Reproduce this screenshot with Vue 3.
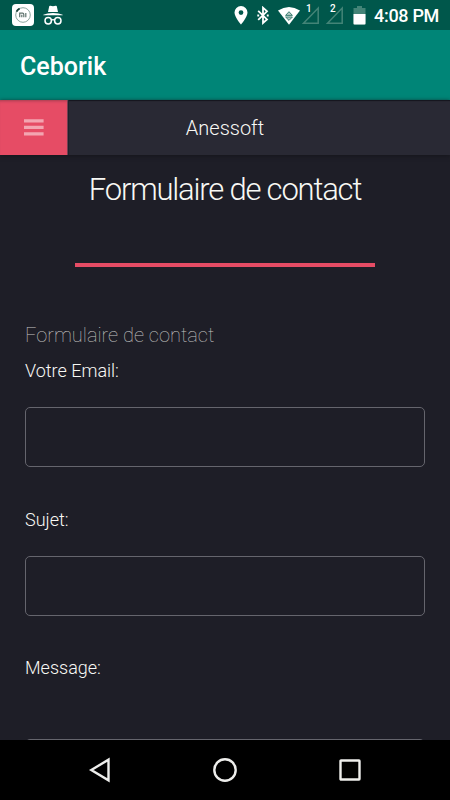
<script setup>
const fields = [
  { id: 'email', label: 'Votre Email:' },
  { id: 'subject', label: 'Sujet:' },
  { id: 'message', label: 'Message:' },
]
</script>

<template>
  <div class="screen">
    <div class="status">
      <svg class="mi" width="22" height="22" viewBox="0 0 22 22">
        <rect width="22" height="22" rx="4" fill="#fff" />
        <circle cx="11" cy="11" r="7.3" fill="none" stroke="#8da69f" stroke-width="1" />
        <path d="M4.5 7.6A7.3 7.3 0 0 1 7.6 4.5" fill="none" stroke="#173f37" stroke-width="1.9" />
        <path d="M7.7 13.2V9.2H10.6Q11.8 9.2 11.8 10.4V13.2M9.8 10.7V13.2M13.8 9V13.2" fill="none" stroke="#60746f" stroke-width="1.2" />
      </svg>
      <svg class="incognito" width="20" height="21" viewBox="0 0 20 21">
        <path d="M5 7 6.2 1.2Q6.5.5 7.4.8L10 1.3 12.6.8Q13.5.5 13.8 1.2L15 7ZM.3 9.8Q4 8 10 8T19.7 9.8V10.3H.3Z" fill="#fff" />
        <circle cx="5.2" cy="15.8" r="3.2" fill="none" stroke="#fff" stroke-width="1.5" />
        <circle cx="14.8" cy="15.8" r="3.2" fill="none" stroke="#fff" stroke-width="1.5" />
        <path d="M8.3 15.3Q10 14 11.7 15.3" fill="none" stroke="#fff" stroke-width="1.4" />
      </svg>
      <svg class="pin" width="14" height="19" viewBox="0 0 14 19">
        <path fill-rule="evenodd" d="M7 0A6.5 6.5 0 0 0 .5 6.5C.5 11 7 18.5 7 18.5S13.5 11 13.5 6.5A6.5 6.5 0 0 0 7 0ZM7 4.2A2.4 2.4 0 1 1 7 9 2.4 2.4 0 0 1 7 4.2Z" fill="#fff" />
      </svg>
      <svg class="bluetooth" width="12" height="19" viewBox="0 0 12 19">
        <path d="M1.2 4.8 10 13.4 6 17V1.7L10 5.3 1.2 13.9" fill="none" stroke="#fff" stroke-width="1.8" />
        <path d="M.3 8.4H2.2V10.4H.3ZM9.8 8.4H11.7V10.4H9.8Z" fill="#fff" />
      </svg>
      <svg class="wifi" width="22" height="18" viewBox="0 0 22 18">
        <path d="M0 3.6Q11-3.5 22 3.6L11 17.7Z" fill="#fff" />
        <path d="M7.6 8.4 11 4.7 14.4 8.4ZM7.6 10H14.4L11 13.4Z" fill="#b4c8c4" stroke="#3d8074" stroke-width="1" />
      </svg>
      <svg v-for="n in 2" :key="n" class="signal" :class="'signal-' + n" width="19" height="22" viewBox="0 0 19 22">
        <path d="M2.5 19.2H17.2V4Z" fill="none" stroke="#438477" stroke-width="1.5" />
        <text x="5" y="7.5" class="sim">{{ n }}</text>
      </svg>
      <svg class="battery" width="13" height="19" viewBox="0 0 13 19">
        <path d="M4 0H9V2H12.5V18.5H.5V2H4Z" fill="#438477" />
        <path d="M.5 8H12.5V17.5Q12.5 18.5 11.5 18.5H1.5Q.5 18.5.5 17.5Z" fill="#fff" />
      </svg>
      <span class="clock">4:08 PM</span>
    </div>
    <header class="app-bar">Ceborik</header>
    <nav class="site-bar">
      <button class="menu" aria-label="Menu">
        <svg width="20" height="17" viewBox="0 0 20 17"><path d="M0 .3H19.6V3.5H0ZM0 6.8H19.6V10H0ZM0 13.3H19.6V16.5H0Z" /></svg>
      </button>
      <span class="brand">Anessoft</span>
    </nav>
    <main class="content">
      <h1>Formulaire de contact</h1>
      <div class="rule"></div>
      <p class="legend">Formulaire de contact</p>
      <div v-for="f in fields" :key="f.id" class="field" :class="f.id">
        <label :for="f.id">{{ f.label }}</label>
        <textarea v-if="f.id === 'message'" :id="f.id"></textarea>
        <input v-else :id="f.id" type="text" />
      </div>
    </main>
    <footer class="nav">
      <svg width="26" height="26" viewBox="0 0 26 26"><path d="M4.3 13 21.5 2.7V23.3Z" /></svg>
      <svg width="26" height="26" viewBox="0 0 26 26"><circle cx="13" cy="13" r="10.7" /></svg>
      <svg width="26" height="26" viewBox="0 0 26 26"><rect x="3.5" y="3.5" width="19" height="19" rx=".5" /></svg>
    </footer>
  </div>
</template>

<style>
body { margin: 0; background: #000; }
</style>

<style scoped>
.screen {
  width: 450px;
  height: 800px;
  display: flex;
  flex-direction: column;
  overflow: hidden;
  background: #1e1e27;
  color: #f8f8f4;
  font-family: Roboto, sans-serif;
}
.status {
  flex: none;
  box-sizing: border-box;
  height: 30px;
  padding-left: 12px;
  display: flex;
  align-items: center;
  background: #00574b;
}
.status svg { flex: none; }
.incognito { margin-left: 9px; }
.pin { margin-left: 170.5px; }
.bluetooth { margin-left: 9.5px; }
.wifi { margin: 1px 0 0 8.5px; }
.signal { overflow: visible; }
.signal-1 { margin-left: 1px; }
.signal-2 { margin-left: 5px; }
.battery { margin-left: 9px; }
.sim { font: 500 10px Roboto, sans-serif; fill: #fff; }
.clock {
  margin: 2px 0 0 8.5px;
  font-size: 18px;
  font-weight: 500;
  letter-spacing: -.3px;
  line-height: 28px;
  white-space: nowrap;
  color: #fff;
}
.app-bar {
  flex: none;
  box-sizing: border-box;
  height: 70px;
  padding: 2px 20px 0;
  display: flex;
  align-items: center;
  background: #008577;
  color: #fff;
  font-size: 25px;
  font-weight: 500;
}
.site-bar {
  flex: none;
  height: 55px;
  display: flex;
  background: #292934;
  box-shadow: inset 0 2px 1px -1px #15151d, 0 1px 4px #15151c;
}
.menu {
  box-sizing: border-box;
  width: 68px;
  padding: 0;
  border: 0;
  border-right: 1px solid #754052;
  box-shadow: inset 0 3px 3px -2px #a33d50, 1px 0 #20222c;
  background: #e64c65;
  display: flex;
  align-items: center;
  justify-content: center;
}
.menu path { fill: #f3a5b1; }
.brand {
  flex: 1;
  padding-right: 68px;
  text-align: center;
  line-height: 56px;
  font-size: 20px;
  font-weight: 300;
}
.content {
  flex: 1;
  min-height: 0;
  overflow: hidden;
  padding: 0 25px;
}
h1 {
  margin: 15px 0 0;
  text-align: center;
  font-size: 31px;
  line-height: 40px;
  font-weight: 300;
  letter-spacing: -1.2px;
}
.rule { width: 300px; height: 4px; margin: 53px auto 0; background: #e64c65; }
.legend {
  margin: 54px 0 0;
  font-size: 20px;
  line-height: 28px;
  font-weight: 100;
  color: #c4c4c2;
}
.field { display: flex; flex-direction: column; }
label { height: 28px; line-height: 28px; font-size: 18px; font-weight: 300; }
input, textarea {
  box-sizing: border-box;
  width: 400px;
  height: 60px;
  margin: 0;
  padding: 0 12px;
  border: 1px solid #65656d;
  border-radius: 5px;
  background: transparent;
  color: inherit;
  font: 300 18px Roboto, sans-serif;
  resize: none;
}
.email { margin-top: 8px; gap: 22px; }
.subject { margin-top: 39px; gap: 22px; }
.message { margin-top: 38px; gap: 57px; }
.nav {
  flex: none;
  height: 60px;
  padding: 0 87px;
  display: flex;
  align-items: center;
  justify-content: space-between;
  background: #000;
}
.nav path, .nav circle, .nav rect { fill: none; stroke: #eeeeec; stroke-width: 2.4; }
</style>
